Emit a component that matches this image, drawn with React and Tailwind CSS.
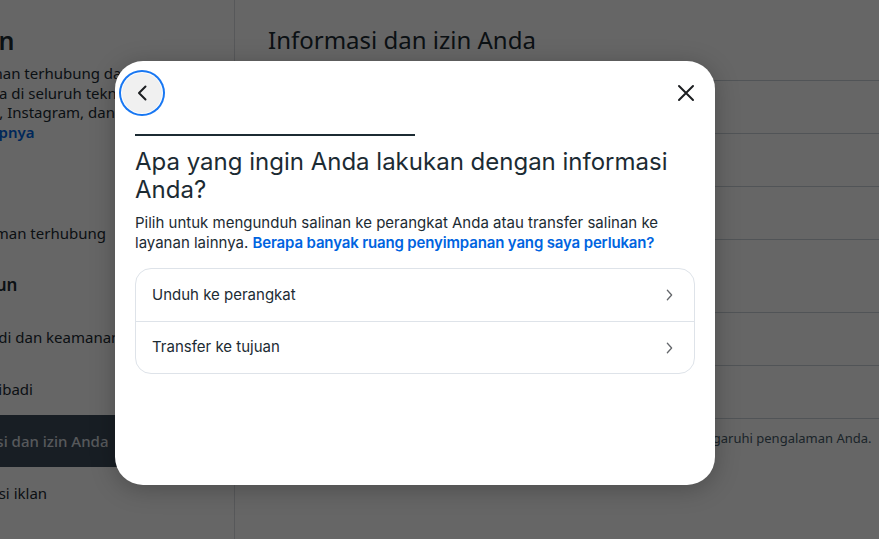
// App.jsx - Accounts Center with "download your information" dialog open
import React from 'react'

const navItems = [
  { label: 'Pengalaman terhubung' },
  { label: 'Pengaturan akun', heading: true },
  { label: 'Kata sandi dan keamanan' },
  { label: 'Detail pribadi' },
  { label: 'Informasi dan izin Anda', active: true },
  { label: 'Preferensi iklan' },
]

const options = ['Unduh ke perangkat', 'Transfer ke tujuan']

function Chevron({ className }) {
  return (
    <svg viewBox="0 0 8 14" className={className} fill="none">
      <path d="M1.5 1.5 6.5 7l-5 5.5" stroke="currentColor" strokeWidth="1.5" strokeLinecap="round" strokeLinejoin="round" />
    </svg>
  )
}

export default function App() {
  return (
    <div className="relative w-[879px] h-[539px] overflow-hidden bg-white font-['Noto_Sans',sans-serif] text-[#1c2b33]">
      {/* Page behind the dialog */}
      <div className="flex h-full">
        <aside className="w-[235px] shrink-0 border-r border-[#dadde1] overflow-hidden">
          <h1 className="-ml-[124px] pt-[24px] text-[25px] leading-[32px] font-semibold whitespace-nowrap">Pusat Akun</h1>
          <p className="-ml-[68px] mt-[8px] text-[15px] leading-[19.5px] whitespace-nowrap">
            Pengalaman terhubung dan pengaturan<br />
            akun Anda di seluruh teknologi Meta seperti<br />
            Facebook, Instagram, dan lainnya.<br />
            <span className="font-semibold text-[#0064e0]">Selengkapnya</span>
          </p>
          <nav className="-ml-[62px] mt-[65px]">
            {navItems.map((item) => (
              <div
                key={item.label}
                className={`h-[52px] flex items-center whitespace-nowrap ${
                  item.active ? 'bg-[#3c4b5a] text-[#dadfe3] font-medium rounded-r-xl' : ''
                } ${item.heading ? '-ml-[64px] text-[17px] font-semibold' : 'text-[15px]'}`}
              >
                {item.label}
              </div>
            ))}
          </nav>
        </aside>

        <main className="flex-1 pl-[33px]">
          <h2 className="pt-[24px] text-[24px] leading-[32px]">Informasi dan izin Anda</h2>
          <div className="mt-[24px] border-t border-[#cbd2d9]">
            <div className="h-[53px] border-b border-[#cbd2d9]"></div>
            <div className="h-[53px] border-b border-[#cbd2d9]"></div>
            <div className="h-[53px] border-b border-[#cbd2d9]"></div>
            <div className="h-[73px] border-b border-[#cbd2d9]"></div>
            <div className="h-[53px] border-b border-[#cbd2d9]"></div>
            <div className="h-[53px] border-b border-[#cbd2d9]"></div>
          </div>
          <p className="mt-[10px] text-[13px] leading-[18px] text-[#465a69] whitespace-nowrap">
            Pelajari cara informasi dan izin yang Anda berikan ke kami dapat memengaruhi pengalaman Anda.
          </p>
        </main>
      </div>

      {/* Overlay + dialog */}
      <div className="absolute inset-0 bg-black/60 pl-[115px] pt-[61px]">
        <div className="w-[600px] h-[424px] rounded-[28px] bg-white shadow-[0_4px_24px_rgba(0,0,0,0.25)] font-['Inter',sans-serif] text-[#1c2b33]">
          <div className="flex items-start justify-between pt-[12px] pl-[7px] pr-[17px]">
            <button className="w-10 h-10 rounded-full bg-[#f0f0f0] flex items-center justify-center ring-2 ring-[#1877f2] ring-offset-1">
              <svg viewBox="0 0 12 16" className="w-[12px] h-[16px]" fill="none">
                <path d="M9.5 1.5 3 8l6.5 6.5" stroke="#1c1e21" strokeWidth="2" strokeLinecap="round" strokeLinejoin="round" />
              </svg>
            </button>
            <button className="w-6 h-6 mt-[8px] flex items-center justify-center">
              <svg viewBox="0 0 18 18" className="w-[18px] h-[18px]" fill="none">
                <path d="M2 2l14 14M16 2 2 16" stroke="#1c1e21" strokeWidth="2" strokeLinecap="round" />
              </svg>
            </button>
          </div>

          <div className="px-[20px]">
            <div className="mt-[21px] h-[2px] w-[280px] bg-[#1c2b33]"></div>
            <h3 className="mt-[12px] text-[24px] leading-[28px]">
              Apa yang ingin Anda lakukan dengan informasi Anda?
            </h3>
            <p className="mt-[9px] text-[15px] leading-[20px]">
              Pilih untuk mengunduh salinan ke perangkat Anda atau transfer salinan ke layanan lainnya.{' '}
              <a className="font-semibold tracking-[-0.15px] text-[#0064e0]">Berapa banyak ruang penyimpanan yang saya perlukan?</a>
            </p>

            <div className="mt-[15px] rounded-2xl border border-[#dee3e9] overflow-hidden">
              {options.map((opt, i) => (
                <div
                  key={opt}
                  className={`h-[52px] flex items-center justify-between pl-[16px] pr-[21px] text-[15px] ${
                    i > 0 ? 'border-t border-[#dee3e9]' : ''
                  }`}
                >
                  <span>{opt}</span>
                  <Chevron className="w-[7px] h-[12px] text-[#65686c]" />
                </div>
              ))}
            </div>
          </div>
        </div>
      </div>
    </div>
  )
}
